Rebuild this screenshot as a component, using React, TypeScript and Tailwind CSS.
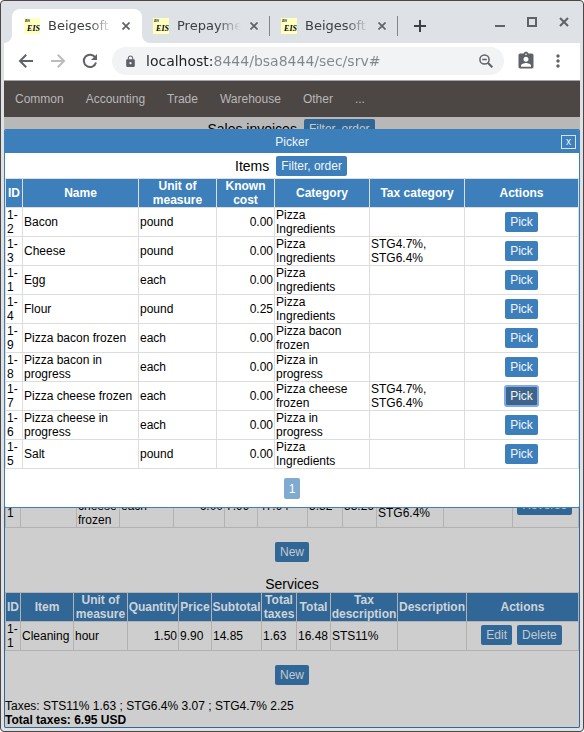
import type { ReactNode } from "react";
import { MdAssignmentInd, MdLock, MdMoreVert } from "react-icons/md";

const tabs = [
  { title: "Beigesoft™", active: true },
  { title: "Prepayments", active: false },
  { title: "Beigesoft™", active: false },
];

const menu = ["Common", "Accounting", "Trade", "Warehouse", "Other", "..."];

const items = [
  { id: "1-\n2", name: "Bacon", unit: "pound", cost: "0.00", category: "Pizza\nIngredients", tax: "" },
  { id: "1-\n3", name: "Cheese", unit: "pound", cost: "0.00", category: "Pizza\nIngredients", tax: "STG4.7%,\nSTG6.4%" },
  { id: "1-\n1", name: "Egg", unit: "each", cost: "0.00", category: "Pizza\nIngredients", tax: "" },
  { id: "1-\n4", name: "Flour", unit: "pound", cost: "0.25", category: "Pizza\nIngredients", tax: "" },
  { id: "1-\n9", name: "Pizza bacon frozen", unit: "each", cost: "0.00", category: "Pizza bacon\nfrozen", tax: "" },
  { id: "1-\n8", name: "Pizza bacon in\nprogress", unit: "each", cost: "0.00", category: "Pizza in\nprogress", tax: "" },
  { id: "1-\n7", name: "Pizza cheese frozen", unit: "each", cost: "0.00", category: "Pizza cheese\nfrozen", tax: "STG4.7%,\nSTG6.4%", pressed: true },
  { id: "1-\n6", name: "Pizza cheese in\nprogress", unit: "each", cost: "0.00", category: "Pizza in\nprogress", tax: "" },
  { id: "1-\n5", name: "Salt", unit: "pound", cost: "0.00", category: "Pizza\nIngredients", tax: "" },
];

const pickerCols = ["w-[17px]", "w-[116px]", "w-[78px]", "w-[58px]", "w-[95px]", "w-[95px]", ""];
const goodsCols = ["w-[15px]", "w-[56px]", "w-[43px]", "w-[54px]", "w-[51px]", "w-[33px]", "w-[50px]", "w-[35px]", "w-[34px]", "w-[67px]", "w-[69px]", ""];
const serviceCols = ["w-[15px]", "w-[53px]", "w-[54px]", "w-[51px]", "w-[33px]", "w-[50px]", "w-[35px]", "w-[34px]", "w-[67px]", "w-[69px]", ""];

const pickerHeads = ["ID", "Name", "Unit of\nmeasure", "Known\ncost", "Category", "Tax category", "Actions"];
const serviceHeads = ["ID", "Item", "Unit of\nmeasure", "Quantity", "Price", "Subtotal", "Total\ntaxes", "Total", "Tax\ndescription", "Description", "Actions"];

const goodsRow = ["1-\n1", "", "Pizza\ncheese\nfrozen", "each", "6.00", "7.99", "47.94", "5.32", "53.26", "STG4.7%,\nSTG6.4%", ""];
const serviceRow = ["1-\n1", "Cleaning", "hour", "1.50", "9.90", "14.85", "1.63", "16.48", "STS11%", ""];

function Cols({ widths }: { widths: string[] }) {
  return (
    <colgroup>
      {widths.map((w, i) => (
        <col key={i} className={w} />
      ))}
    </colgroup>
  );
}

function Button({ children, tone = "bright" }: { children: ReactNode; tone?: "bright" | "dim" | "pressed" }) {
  const tones = {
    bright: "bg-[#3d7fba] text-[#f2f6fa]",
    dim: "bg-[#316796] text-[#c3c9cf]",
    pressed: "bg-[#3e6589] text-[#f2f6fa] outline-2 -outline-offset-1 outline-[#7fa9ee]",
  };
  return (
    <button type="button" className={`h-5 rounded-xs px-[5px] text-xs leading-[14px] ${tones[tone]}`}>
      {children}
    </button>
  );
}

function Favicon() {
  return (
    <span className="relative flex size-4 shrink-0 items-end justify-end overflow-hidden bg-[#ffffbf] font-['Liberation_Serif',serif] text-[8px] leading-[11px] font-bold text-black italic">
      <span className="absolute top-0 left-px text-[4px] leading-[6px]">BS</span>
      EIS
    </span>
  );
}

function Cross() {
  return (
    <svg viewBox="0 0 8 8" className="size-2" fill="none" stroke="#5f6368" strokeWidth="1.7">
      <path d="M.5.5l7 7M7.5.5l-7 7" />
    </svg>
  );
}

function TabStrip() {
  return (
    <div className="flex h-[42px] items-end pl-2">
      {tabs.map((tab, i) => (
        <div
          key={i}
          className={
            tab.active
              ? "relative flex h-[34px] w-[130px] items-center rounded-t-lg bg-white pr-3 pl-3"
              : "relative flex h-[34px] w-[128px] items-center pr-3 pl-[11px]"
          }
        >
          {tab.active && (
            <>
              <svg viewBox="0 0 8 8" className="absolute bottom-0 -left-2 size-2" fill="#fff">
                <path d="M8 0v8H0A8 8 0 0 0 8 0z" />
              </svg>
              <svg viewBox="0 0 8 8" className="absolute -right-2 bottom-0 size-2" fill="#fff">
                <path d="M0 0v8h8A8 8 0 0 1 0 0z" />
              </svg>
            </>
          )}
          <Favicon />
          <span className="ml-2 min-w-0 flex-1 overflow-hidden font-['DejaVu_Sans',sans-serif] text-[13px] leading-4 whitespace-nowrap text-[#3c4043] [mask-image:linear-gradient(to_right,#000_62%,transparent_98%)]">
            {tab.title}
          </span>
          <button type="button" aria-label="Close tab" className="ml-2 shrink-0">
            <Cross />
          </button>
          {!tab.active && <span className="absolute top-[7px] right-0 h-5 w-px bg-[#80868b]" />}
        </div>
      ))}
      <button type="button" aria-label="New tab" className="mb-[11px] ml-4">
        <svg viewBox="0 0 12 12" className="size-3" stroke="#3c4043" strokeWidth="2">
          <path d="M6 0v12M0 6h12" />
        </svg>
      </button>
      <div className="mb-4 ml-auto flex items-center gap-[22px] pr-[11px]">
        <button type="button" aria-label="Minimize">
          <svg viewBox="0 0 10 10" className="size-[10px]" stroke="#5f6368" strokeWidth="2">
            <path d="M0 9h10" />
          </svg>
        </button>
        <button type="button" aria-label="Maximize">
          <svg viewBox="0 0 10 10" className="size-[10px]" fill="none" stroke="#5f6368" strokeWidth="2">
            <path d="M1 1h8v8H1z" />
          </svg>
        </button>
        <button type="button" aria-label="Close window">
          <svg viewBox="0 0 10 10" className="size-[10px]" fill="none" stroke="#5f6368" strokeWidth="2">
            <path d="M1 1l8 8M9 1l-8 8" />
          </svg>
        </button>
      </div>
    </div>
  );
}

function Toolbar() {
  return (
    <div className="flex h-[38px] items-center border-b border-[#a5a5aa] bg-white pr-3 pb-px pl-[14px]">
      <div className="flex gap-4">
        <button type="button" aria-label="Back">
          <svg viewBox="0 0 16 16" className="size-4" fill="none" stroke="#5f6368" strokeWidth="2">
            <path d="M15 8H2.5M8.2 1.8L2 8l6.2 6.2" />
          </svg>
        </button>
        <button type="button" aria-label="Forward">
          <svg viewBox="0 0 16 16" className="size-4" fill="none" stroke="#babcbe" strokeWidth="2">
            <path d="M1 8h12.500M7.800 1.800L14 8l-6.200 6.200" />
          </svg>
        </button>
        <button type="button" aria-label="Reload">
          <svg viewBox="0 0 16 16" className="size-4" fill="none" stroke="#5f6368" strokeWidth="2">
            <path d="M13.300 4.600A6.200 6.200 0 1 0 14 9.500" />
            <path d="M15 1v6H9z" fill="#5f6368" stroke="none" />
          </svg>
        </button>
      </div>
      <div className="ml-[14px] flex h-7 min-w-0 flex-1 items-center rounded-full bg-[#f1f3f4] pr-[11px] pl-3">
        <MdLock size={13} color="#5f6368" />
        <input
          type="text"
          aria-label="Address"
          defaultValue="localhost:8444/bsa8444/sec/srv#"
          className="ml-[9px] min-w-0 flex-1 bg-[linear-gradient(90deg,#202124_68px,#80868b_68px)] bg-clip-text font-['DejaVu_Sans',sans-serif] text-sm leading-5 text-transparent outline-none"
        />
        <button type="button" aria-label="Zoom">
          <svg viewBox="0 0 14 14" className="size-[14px]" fill="none" stroke="#5f6368" strokeWidth="1.500">
            <circle cx="5.500" cy="5.500" r="4.600" />
            <path d="M3.200 5.500h4.600" />
            <path d="M8.800 8.800l4.500 4.500" strokeWidth="2" />
          </svg>
        </button>
      </div>
      <button type="button" aria-label="Profile" className="ml-3">
        <MdAssignmentInd size={20} color="#5f6368" />
      </button>
      <button type="button" aria-label="Browser menu" className="ml-3">
        <MdMoreVert size={20} color="#5f6368" />
      </button>
    </div>
  );
}

function InvoiceDialog() {
  return (
    <section
      aria-label="Invoice"
      className="flex flex-1 flex-col items-center justify-end overflow-hidden rounded-xs border border-[#316796] bg-[#cecece]"
    >
      <table className="w-full table-fixed border-collapse [&_td]:border [&_td]:border-[#b2b2b2]">
        <Cols widths={goodsCols} />
        <tbody>
          <tr>
            {goodsRow.map((v, i) => (
              <td key={i} className={i === 4 ? "px-px text-right" : "px-px whitespace-pre-line"}>
                {v}
              </td>
            ))}
            <td>
              <div className="flex justify-center pr-[2px] pb-[2px]">
                <Button tone="dim">Reverse</Button>
              </div>
            </td>
          </tr>
        </tbody>
      </table>
      <div className="flex py-[14px]">
        <Button tone="dim">New</Button>
      </div>
      <h2 className="text-sm leading-4">Services</h2>
      <table className="w-full table-fixed border-collapse [&_td]:border [&_td]:border-[#b2b2b2] [&_th]:border [&_th]:border-[#b2b2b2]">
        <Cols widths={serviceCols} />
        <thead>
          <tr className="bg-[#316796] text-[#ced3d8]">
            {serviceHeads.map((h) => (
              <th key={h} className="whitespace-pre">
                {h}
              </th>
            ))}
          </tr>
        </thead>
        <tbody>
          <tr>
            {serviceRow.map((v, i) => (
              <td key={i} className={i === 3 ? "px-px text-right" : "px-px whitespace-pre-line"}>
                {v}
              </td>
            ))}
            <td>
              <div className="flex justify-center gap-[5px] pr-[2px] pb-[2px]">
                <Button tone="dim">Edit</Button>
                <Button tone="dim">Delete</Button>
              </div>
            </td>
          </tr>
        </tbody>
      </table>
      <div className="flex py-[14px]">
        <Button tone="dim">New</Button>
      </div>
      <div className="w-full">
        <p>Taxes: STS11% 1.63 ; STG6.4% 3.07 ; STG4.7% 2.25</p>
        <p className="font-bold">Total taxes: 6.95 USD</p>
      </div>
    </section>
  );
}

function PickerDialog() {
  return (
    <section
      role="dialog"
      aria-label="Picker"
      className="absolute inset-x-0 top-3 overflow-hidden rounded-xs border border-[#3d7fba] bg-white"
    >
      <header className="relative flex h-[23px] items-center justify-center bg-[#3d7fba] text-[#eef4f9]">
        Picker
        <button
          type="button"
          aria-label="Close"
          className="absolute top-[5px] right-[3px] flex h-[14px] w-[15px] items-center justify-center border border-[#d5e3f0] text-[10px] leading-3"
        >
          x
        </button>
      </header>
      <div className="flex items-center justify-center gap-[7px] pt-[3px] pr-[2px] pb-[2px]">
        <h2 className="text-sm leading-5">Items</h2>
        <Button>Filter, order</Button>
      </div>
      <table className="w-full table-fixed border-collapse [&_td]:border [&_td]:border-[#ddd] [&_th]:border [&_th]:border-[#ddd]">
        <Cols widths={pickerCols} />
        <thead>
          <tr className="bg-[#3d7fba] text-white">
            {pickerHeads.map((h) => (
              <th key={h} className="whitespace-pre">
                {h}
              </th>
            ))}
          </tr>
        </thead>
        <tbody>
          {items.map((it) => (
            <tr key={it.id}>
              <td className="px-px whitespace-pre-line">{it.id}</td>
              <td className="px-px whitespace-pre-line">{it.name}</td>
              <td className="px-px">{it.unit}</td>
              <td className="px-px text-right">{it.cost}</td>
              <td className="px-px whitespace-pre-line">{it.category}</td>
              <td className="px-px whitespace-pre-line">{it.tax}</td>
              <td>
                <div className="flex justify-center">
                  <Button tone={it.pressed ? "pressed" : "bright"}>Pick</Button>
                </div>
              </td>
            </tr>
          ))}
        </tbody>
      </table>
      <div className="flex justify-center pt-[9px] pb-2">
        <button type="button" className="h-[21px] rounded-xs bg-[#81aad0] px-[5px] text-white">
          1
        </button>
      </div>
    </section>
  );
}

export default function App() {
  return (
    <div className="flex min-h-screen flex-col rounded-sm border border-[#4c4645] bg-[#dee1e6] px-[3px] pb-[3px] font-['Liberation_Sans',Arial,sans-serif] text-xs leading-[14px] text-black">
      <TabStrip />
      <Toolbar />
      <nav className="flex h-9 items-center bg-[#4c4645]">
        {menu.map((m) => (
          <a key={m} href="#" className="px-[11px] text-[#b9b7b7]">
            {m}
          </a>
        ))}
      </nav>
      <main className="relative flex flex-1 flex-col bg-[#b8b8b8]">
        <div className="flex h-3 items-start justify-center gap-[7px] overflow-hidden pt-[2px] pr-[2px]">
          <h1 className="text-sm leading-5">Sales invoices</h1>
          <Button tone="dim">Filter, order</Button>
        </div>
        <InvoiceDialog />
        <PickerDialog />
      </main>
    </div>
  );
}
